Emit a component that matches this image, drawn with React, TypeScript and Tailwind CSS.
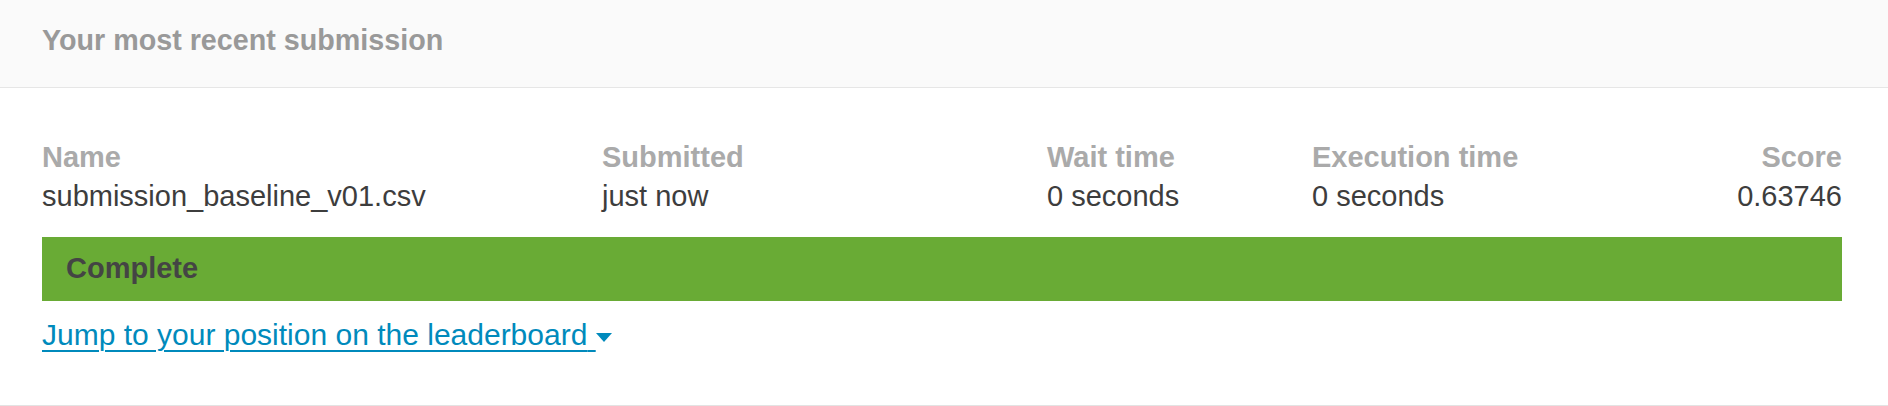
import React from "react";

type Column = { label: string; value: string; align?: "right" };

const columns: Column[] = [
  { label: "Name", value: "submission_baseline_v01.csv" },
  { label: "Submitted", value: "just now" },
  { label: "Wait time", value: "0 seconds" },
  { label: "Execution time", value: "0 seconds" },
  { label: "Score", value: "0.63746", align: "right" },
];

// Latest-submission panel: header strip, stat columns, status bar and leaderboard link.
export default function App() {
  return (
    <div className="w-full bg-white font-['Liberation_Sans',Arial,sans-serif] border-b border-[#e3e3e3]">
      <div className="flex h-[88px] items-center border-b border-[#e6e6e6] bg-[#fafafa] pl-[42px] pb-[8px]">
        <h2 className="text-[28.7px] font-bold leading-9 text-[#999999]">Your most recent submission</h2>
      </div>

      <div className="pl-[42px] pr-[46px] pt-[51px] pb-[52px]">
        <div className="grid grid-cols-[560px_445px_265px_1fr_auto]">
          {columns.map((col) => (
            <div key={col.label} className={col.align === "right" ? "text-right" : ""}>
              <div className="text-[29px] font-bold leading-9 text-[#aaaaaa]">{col.label}</div>
              <div className="mt-[3px] text-[29px] leading-9 text-[#3d3d3d]">{col.value}</div>
            </div>
          ))}
        </div>

        <div className="mt-[23px] flex h-16 items-center bg-[#69ab35] px-6">
          <span className="text-[29px] font-bold text-[#444444]">Complete</span>
        </div>

        <a href="#leaderboard" className="mt-4 inline-block text-[30px] leading-9 text-[#008abc] underline decoration-2 underline-offset-[5px]">
          Jump to your position on the leaderboard{" "}
          <svg viewBox="0 0 16 9" className="inline-block h-[9px] w-[16px] align-middle" fill="currentColor">
            <path d="M0 0h16L8 9z" />
          </svg>
        </a>
      </div>
    </div>
  );
}
